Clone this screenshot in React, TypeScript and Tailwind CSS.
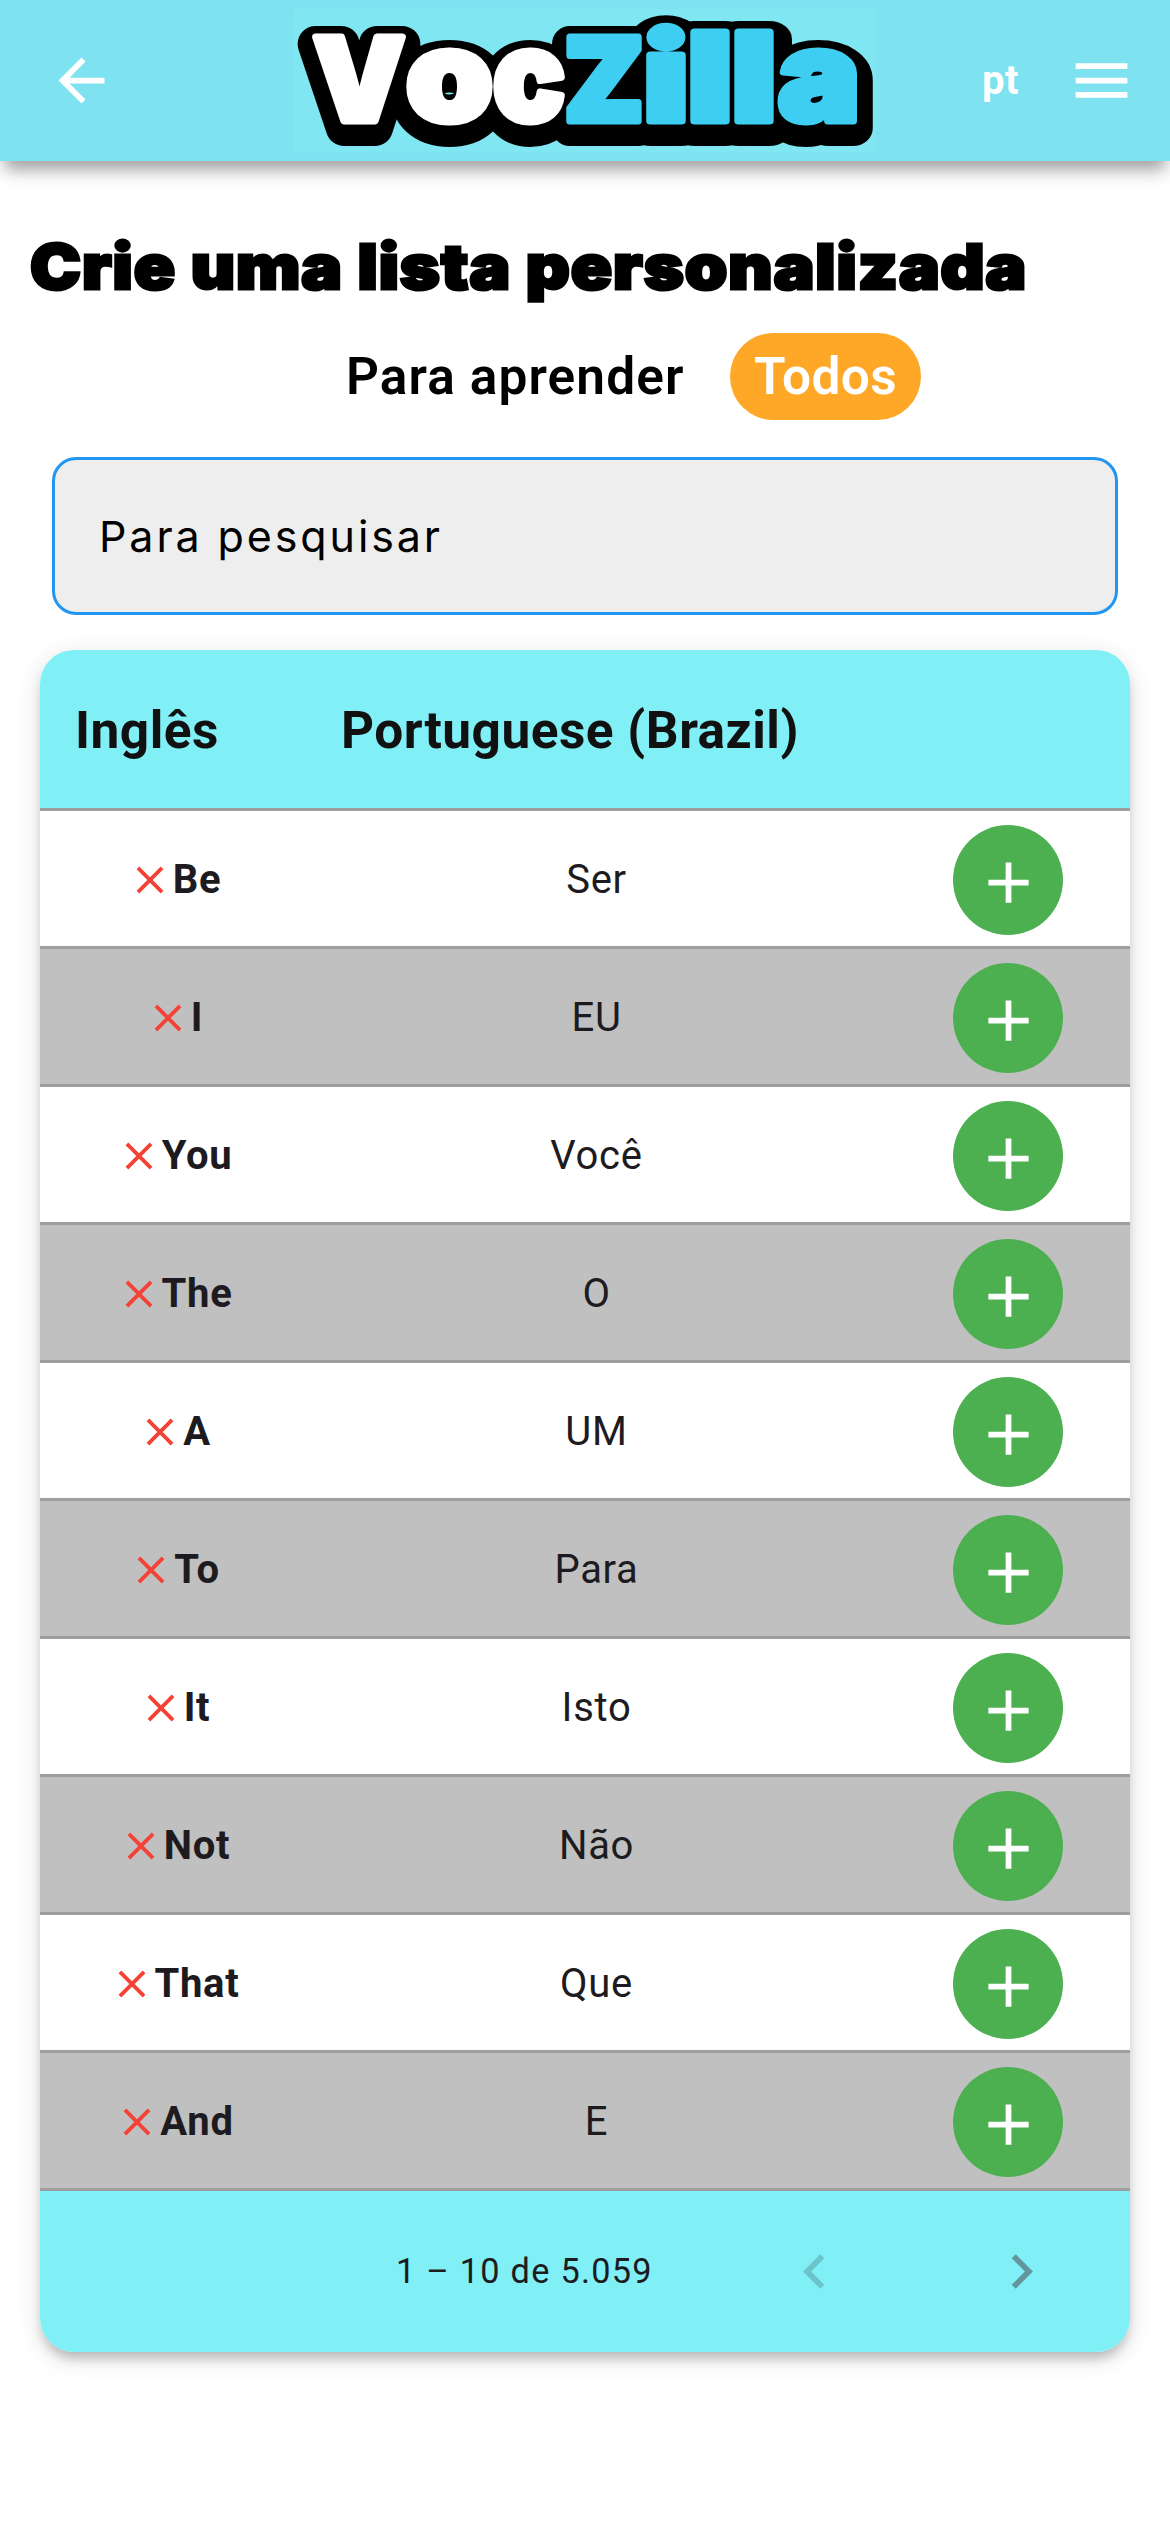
import React from "react";

const rows = [
  ["Be", "Ser"],
  ["I", "EU"],
  ["You", "Você"],
  ["The", "O"],
  ["A", "UM"],
  ["To", "Para"],
  ["It", "Isto"],
  ["Not", "Não"],
  ["That", "Que"],
  ["And", "E"],
];

/* Each logo letter: left edge, width and size inside a 582x144 box. */
type Letter = { ch: string; x: number; w: number; size: number };
const voc: Letter[] = [
  { ch: "V", x: 19, w: 92, size: 116 },
  { ch: "o", x: 112, w: 87, size: 126 },
  { ch: "c", x: 199, w: 72, size: 126 },
];
const zilla: Letter[] = [
  { ch: "Z", x: 270, w: 80, size: 116 },
  { ch: "i", x: 349, w: 46, size: 121 },
  { ch: "l", x: 393, w: 46, size: 123 },
  { ch: "l", x: 437, w: 46, size: 123 },
  { ch: "a", x: 484, w: 82, size: 126 },
];

function Word({ id, letters }: { id: string; letters: Letter[] }) {
  return (
    <text id={id} y={112}>
      {letters.map((l, i) => (
        <tspan key={i} x={l.x} fontSize={l.size} textLength={l.w} lengthAdjust="spacingAndGlyphs">
          {l.ch}
        </tspan>
      ))}
    </text>
  );
}

function Logo() {
  return (
    <svg
      viewBox="0 0 582 144"
      strokeLinejoin="round"
      className="h-[144px] w-[582px] overflow-visible bg-[#80e7f2] font-['Inter',sans-serif] font-black"
    >
      <g fill="#000" stroke="#000" strokeWidth="36" transform="translate(0 7)" aria-hidden="true">
        <use href="#logo-voc" />
        <use href="#logo-zilla" />
      </g>
      <g fill="#fff" stroke="#fff" strokeWidth="7">
        <Word id="logo-voc" letters={voc} />
      </g>
      <g fill="#3dcef2" stroke="#3dcef2" strokeWidth="7">
        <Word id="logo-zilla" letters={zilla} />
      </g>
    </svg>
  );
}

function Icon({ d, className }: { d: string; className: string }) {
  return (
    <svg viewBox="0 0 24 24" fill="currentColor" className={className}>
      <path d={d} />
    </svg>
  );
}

export default function App() {
  return (
    <div className="min-h-[2532px] w-[1170px] overflow-hidden bg-white font-['Roboto',sans-serif]">
      <header className="flex h-[161px] items-center bg-[#7ee2f0] pl-[47px] pr-[34px] shadow-[0_14px_14px_-6px_rgba(0,0,0,0.3),0_6px_26px_rgba(0,0,0,0.14)]">
        <Icon className="size-[69px] text-white" d="M20 11H7.83l5.59-5.59L12 4l-8 8 8 8 1.41-1.41L7.83 13H20v-2z" />
        <div className="ml-[178px]">
          <Logo />
        </div>
        <span className="ml-auto mr-[48px] text-[40px] font-bold leading-none tracking-[0.5px] text-white">pt</span>
        <Icon className="size-[69px] text-white" d="M3 18h18v-2H3v2zm0-5h18v-2H3v2zm0-7v2h18V6H3z" />
      </header>

      <h1 className="ml-[30px] mt-[67px] w-[940px] origin-left scale-x-110 whitespace-nowrap font-['Inter',sans-serif] text-[62px] font-black leading-[77px] tracking-[0.9px] text-black [-webkit-text-stroke:3px_black]">
        Crie uma lista personalizada
      </h1>

      <div className="mt-[28px] flex h-[87px] items-center pl-[346px] text-[51.4px] font-semibold leading-none">
        <span className="w-[384px] tracking-[1.1px] text-black">Para aprender</span>
        <span className="flex h-[87px] w-[191px] items-center justify-center rounded-full bg-[#ffa726] tracking-[0.4px] text-white">Todos</span>
      </div>

      <div className="ml-[52px] mt-[37px] flex h-[158px] w-[1066px] items-center rounded-[24px] border-[3px] border-[#2196f3] bg-[#eeeeee] pl-[44px] font-['Inter',sans-serif] text-[43px] tracking-[2.9px] text-black">
        Para pesquisar
      </div>

      <div className="ml-[40px] mt-[35px] w-[1090px] overflow-hidden rounded-[34px] shadow-[0_9px_11px_-3px_rgba(0,0,0,0.2),0_6px_24px_rgba(0,0,0,0.14)]">
        <div className="flex h-[161px] items-center border-b-[3px] border-[#9e9e9e] bg-[#80eff6] pl-[35px] pt-[3px] text-[51.4px] font-bold leading-none tracking-[0.5px] text-[#111111]">
          <span className="w-[266px]">Inglês</span>
          <span>Portuguese (Brazil)</span>
        </div>
        {rows.map(([en, pt], i) => (
          <div
            key={en}
            className={`flex h-[138px] items-center border-b-[3px] border-[#9e9e9e] text-[40px] leading-none tracking-[0.7px] text-[#1d1b20] ${
              i % 2 ? "bg-[#c0c0c0]" : "bg-white"
            }`}
          >
            <div className="mt-[3px] flex w-[268px] items-center justify-center font-bold">
              <Icon
                className="size-[46px] text-[#f44336]"
                d="M19 6.41L17.59 5 12 10.59 6.41 5 5 6.41 10.59 12 5 17.59 6.41 19 12 13.41 17.59 19 19 17.59 13.41 12z"
              />
              <span>{en}</span>
            </div>
            <div className="mt-[3px] w-[577px] text-center">{pt}</div>
            <div className="ml-[68px] mt-[3px] flex size-[110px] items-center justify-center rounded-full bg-[#4caf50] pt-[5px] text-white">
              <Icon className="size-[69px]" d="M19 13h-6v6h-2v-6H5v-2h6V5h2v6h6v2z" />
            </div>
          </div>
        ))}
        <div className="flex h-[161px] items-center bg-[#80eff6] text-[34.3px] leading-none tracking-[1.25px] text-[#1d1b20]">
          <span className="ml-[356px] w-[384px]">1 – 10 de 5.059</span>
          <Icon className="size-[69px] text-[#6cc3c9]" d="M15.41 7.41L14 6l-6 6 6 6 1.41-1.41L10.83 12z" />
          <Icon className="ml-[138px] size-[69px] text-[#64969e]" d="M10 6L8.59 7.41 13.17 12l-4.58 4.59L10 18l6-6z" />
        </div>
      </div>
    </div>
  );
}
